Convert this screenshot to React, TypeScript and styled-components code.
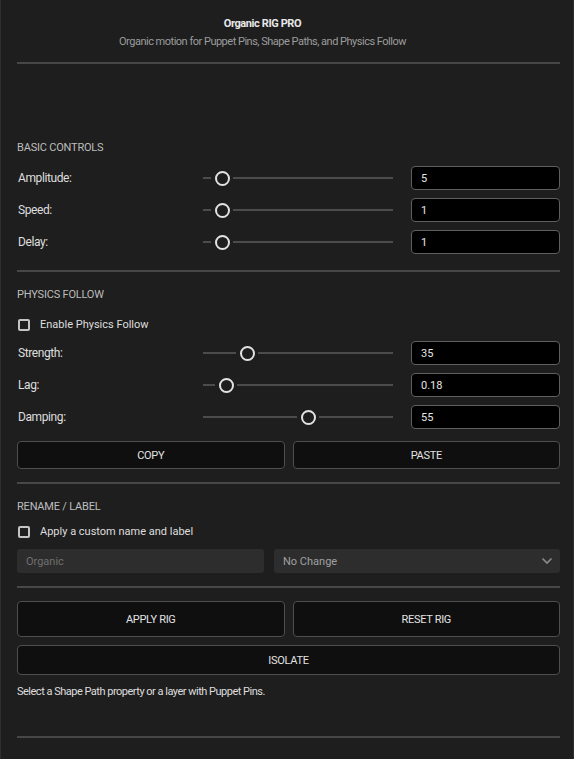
import styled, { createGlobalStyle } from "styled-components";

const GlobalStyles = createGlobalStyle`
  html, body {
    margin: 0;
    padding: 0;
    background: #1e1e1e;
  }

  body {
    font-family: "Roboto", "Liberation Sans", sans-serif;
    font-size: 11px;
    color: #dcdcdc;
  }
`;

const Panel = styled.div`
  box-sizing: border-box;
  width: 574px;
  min-height: 759px;
  padding: 0 13px 20px 16px;
  background: #1e1e1e;
  border-left: 1px solid #2e2e2e;
  border-right: 1px solid #2e2e2e;
`;

const Header = styled.header`
  display: flex;
  flex-direction: column;
  align-items: center;
  padding: 17px 52px 0 0;
  gap: 4px;
`;

const Title = styled.h1`
  margin: 0;
  font-size: 11px;
  font-weight: 700;
  line-height: 14px;
  letter-spacing: -0.4px;
  color: #e8e8e8;
`;

const Subtitle = styled.p`
  margin: 0;
  font-size: 11px;
  line-height: 14px;
  letter-spacing: -0.5px;
  color: #9c9c9c;
`;

const Divider = styled.hr<{ $top?: number; $bottom?: number }>`
  margin: ${(p) => p.$top ?? 13}px 0 ${(p) => p.$bottom ?? 0}px;
  border: none;
  height: 2px;
  background: #474747;
`;

const Section = styled.section`
  display: flex;
  flex-direction: column;
`;

const SectionTitle = styled.h2`
  margin: 0;
  font-size: 11px;
  font-weight: 400;
  line-height: 14px;
  letter-spacing: -0.2px;
  color: #bdbdbd;
  text-transform: uppercase;
`;

const Spacer = styled.div<{ $h: number }>`
  height: ${(p) => p.$h}px;
`;

const Rows = styled.div`
  display: flex;
  flex-direction: column;
  gap: 8px;
`;

const ControlRow = styled.div`
  display: grid;
  grid-template-columns: 186px 190px 1fr;
  align-items: center;
  height: 24px;
`;

const RowLabel = styled.span`
  padding-left: 1px;
  font-size: 12px;
  letter-spacing: -0.4px;
  color: #dedede;
`;

const Track = styled.div`
  display: flex;
  align-items: center;
  height: 16px;
`;

const TrackLine = styled.div<{ $grow?: boolean }>`
  height: 2px;
  background: #4c4c4c;
  flex: ${(p) => (p.$grow ? "1" : "none")};
`;

const Thumb = styled.div`
  box-sizing: border-box;
  flex: none;
  width: 15px;
  height: 15px;
  margin: 0 3px 0 4px;
  border: 2px solid #e2e2e2;
  border-radius: 50%;
`;

const ValueBox = styled.div`
  box-sizing: border-box;
  display: flex;
  align-items: center;
  height: 24px;
  margin-left: 18px;
  padding-left: 9px;
  background: #000;
  border: 1px solid #5f5f5f;
  border-radius: 4px;
  font-size: 11px;
  color: #e6e6e6;
`;

const CheckRow = styled.label`
  display: flex;
  align-items: center;
  gap: 10px;
  padding-left: 1px;
  font-size: 11px;
  color: #dedede;
`;

const Box = styled.span`
  box-sizing: border-box;
  width: 12px;
  height: 12px;
  border: 2px solid #c4c4c4;
  border-radius: 2px;
`;

const ButtonRow = styled.div<{ $cols: number }>`
  display: grid;
  grid-template-columns: repeat(${(p) => p.$cols}, 1fr);
  column-gap: 8px;
`;

const Button = styled.button<{ $height: number }>`
  box-sizing: border-box;
  height: ${(p) => p.$height}px;
  background: #0f0f0f;
  border: 1px solid #4e4e4e;
  border-radius: 4px;
  font-family: inherit;
  font-size: 11px;
  letter-spacing: -0.3px;
  color: #e2e2e2;
  text-transform: uppercase;
`;

const FieldRow = styled.div`
  display: grid;
  grid-template-columns: 247px 1fr;
  column-gap: 10px;
`;

const TextField = styled.div`
  display: flex;
  align-items: center;
  height: 24px;
  padding-left: 9px;
  background: #2d2d2d;
  border-radius: 3px;
  font-size: 11px;
  color: #707070;
`;

const SelectField = styled(TextField)`
  justify-content: space-between;
  padding-right: 7px;
  color: #a0a0a0;
`;

const StatusText = styled.p`
  margin: 0;
  font-size: 11px;
  line-height: 14px;
  letter-spacing: -0.5px;
  color: #dedede;
`;

// thumb center offset (px) from the start of the track
const Slider = ({ at }: { at: number }) => (
  <Track>
    <TrackLine style={{ width: at - 11 }} />
    <Thumb />
    <TrackLine $grow />
  </Track>
);

const Chevron = () => (
  <svg width="12" height="8" viewBox="0 0 12 8">
    <path d="M1.5 1.5 L6 6 L10.5 1.5" fill="none" stroke="#8a8a8a" strokeWidth="1.7" />
  </svg>
);

type Control = { label: string; value: string; at: number };

const basic: Control[] = [
  { label: "Amplitude:", value: "5", at: 19 },
  { label: "Speed:", value: "1", at: 19 },
  { label: "Delay:", value: "1", at: 19 },
];

const physics: Control[] = [
  { label: "Strength:", value: "35", at: 44 },
  { label: "Lag:", value: "0.18", at: 23 },
  { label: "Damping:", value: "55", at: 105 },
];

const ControlList = ({ items }: { items: Control[] }) => (
  <Rows>
    {items.map((c) => (
      <ControlRow key={c.label}>
        <RowLabel>{c.label}</RowLabel>
        <Slider at={c.at} />
        <ValueBox>{c.value}</ValueBox>
      </ControlRow>
    ))}
  </Rows>
);

const App = () => {
  return (
    <Panel>
      <GlobalStyles />
      <Header>
        <Title>Organic RIG PRO</Title>
        <Subtitle>Organic motion for Puppet Pins, Shape Paths, and Physics Follow</Subtitle>
      </Header>
      <Divider $top={13} $bottom={77} />

      <Section>
        <SectionTitle>Basic Controls</SectionTitle>
        <Spacer $h={11} />
        <ControlList items={basic} />
      </Section>
      <Divider $top={16} $bottom={16} />

      <Section>
        <SectionTitle>Physics Follow</SectionTitle>
        <Spacer $h={16} />
        <CheckRow>
          <Box />
          Enable Physics Follow
        </CheckRow>
        <Spacer $h={10} />
        <ControlList items={physics} />
        <Spacer $h={12} />
        <ButtonRow $cols={2}>
          <Button $height={28}>Copy</Button>
          <Button $height={28}>Paste</Button>
        </ButtonRow>
      </Section>
      <Divider $top={13} $bottom={16} />

      <Section>
        <SectionTitle>Rename / Label</SectionTitle>
        <Spacer $h={11} />
        <CheckRow>
          <Box />
          Apply a custom name and label
        </CheckRow>
        <Spacer $h={11} />
        <FieldRow>
          <TextField>Organic</TextField>
          <SelectField>
            No Change
            <Chevron />
          </SelectField>
        </FieldRow>
      </Section>
      <Divider $top={13} $bottom={13} />

      <Section>
        <ButtonRow $cols={2}>
          <Button $height={36}>Apply Rig</Button>
          <Button $height={36}>Reset Rig</Button>
        </ButtonRow>
        <Spacer $h={8} />
        <ButtonRow $cols={1}>
          <Button $height={30}>Isolate</Button>
        </ButtonRow>
        <Spacer $h={10} />
        <StatusText>Select a Shape Path property or a layer with Puppet Pins.</StatusText>
      </Section>
      <Divider $top={37} />
    </Panel>
  );
};

export default App;
